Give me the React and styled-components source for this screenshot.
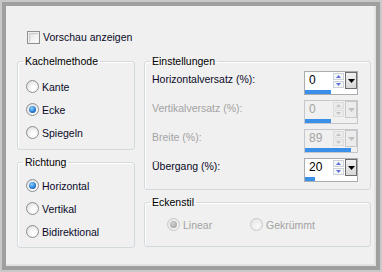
import React from "react";
import styled, { createGlobalStyle } from "styled-components";

const GlobalStyle = createGlobalStyle`
  html, body { margin: 0; padding: 0; background: #f0f0f0; }
  body { font-family: "Liberation Sans", Arial, sans-serif; font-size: 10.5px; color: #000; }
`;

const Frame = styled.div`
  width: 382px;
  height: 272px;
  box-sizing: border-box;
  border: 2px solid #c8c8c8;
  display: flex;
`;

const Panel = styled.div`
  flex: 1;
  border: 4px solid #9f9f9f;
  background: #f0f0f0;
  box-shadow: inset -2px -2px 0 #e2e2e2;
  padding: 25px 0 0 11px;
  display: flex;
  flex-direction: column;
`;

const CheckRow = styled.label`
  display: flex;
  align-items: center;
  gap: 3px;
  height: 13px;
  margin: 0 0 11px 10px;
  line-height: 13px;
  color: #0a0a28;
`;

const CheckBox = styled.span`
  width: 13px;
  height: 13px;
  box-sizing: border-box;
  border: 1px solid #8e8f8f;
  background: linear-gradient(135deg, #dcdcdc 0%, #f4f4f4 60%, #ffffff 100%);
  box-shadow: inset 0 0 0 1px #f2f2f2, inset 1px 1px 1px 1px #c8c8c8;
`;

const Body = styled.div`
  display: flex;
  gap: 9px;
`;

const Column = styled.div`
  width: ${(p) => p.$w}px;
  display: flex;
  flex-direction: column;
`;

const Group = styled.fieldset`
  margin: ${(p) => p.$mt || 0}px 0 0 0;
  padding: ${(p) => p.$pt}px 0 ${(p) => p.$pb}px 0;
  border: 1px solid #d3dade;
  border-radius: 3px;
  box-shadow: inset 1px 1px 0 #ffffff;
  min-width: 0;
`;

const Legend = styled.legend`
  padding: 0 2px;
  margin-left: 5px;
  line-height: 13px;
  color: #000;
`;

const RadioRow = styled.label`
  display: flex;
  align-items: center;
  gap: 3px;
  height: 23px;
  padding-left: ${(p) => p.$pl ?? 8}px;
  width: ${(p) => (p.$w ? `${p.$w}px` : "auto")};
  color: ${(p) => (p.$disabled ? "#a3a3a3" : "#0a0a28")};
`;

const RadioCircle = styled.span`
  width: 13px;
  height: 13px;
  box-sizing: border-box;
  border-radius: 50%;
  border: 1px solid ${(p) => (p.$disabled ? "#c9c9c9" : "#8c8f93")};
  background: ${(p) =>
    p.$disabled
      ? "radial-gradient(circle at 60% 65%, #f8f8f8, #e2e2e2)"
      : "radial-gradient(circle at 60% 65%, #ffffff 20%, #d6d6d6 100%)"};
  display: flex;
  align-items: center;
  justify-content: center;
  &::after {
    content: "";
    display: ${(p) => (p.$checked ? "block" : "none")};
    width: 7px;
    height: 7px;
    border-radius: 50%;
    background: ${(p) =>
      p.$disabled
        ? "radial-gradient(circle at 40% 35%, #d0d0d0, #9a9a9a)"
        : "radial-gradient(circle at 40% 35%, #8fd3ff 0%, #2a7fd4 55%, #0f3f78 100%)"};
  }
`;

const RadioInline = styled.div`
  display: flex;
  padding-left: 22px;
`;

const FieldRow = styled.div`
  display: flex;
  justify-content: space-between;
  align-items: flex-start;
  height: 24px;
  padding: 0 12px 0 7px;
`;

const FieldLabel = styled.span`
  line-height: 17px;
  color: ${(p) => (p.$disabled ? "#a3a3a3" : "#0a0a28")};
`;

const Fields = styled.div`
  display: flex;
  flex-direction: column;
  gap: 5px;
`;

const Spin = styled.div`
  width: 54px;
  height: 24px;
  box-sizing: border-box;
  border: 1px solid ${(p) => (p.$disabled ? "#c4c8cc" : "#a9adb2")};
  display: flex;
  flex-direction: column;
  background: ${(p) => (p.$disabled ? "#f0f0f0" : "#ffffff")};
`;

const SpinTop = styled.div`
  display: flex;
  height: 17px;
`;

const SpinValue = styled.span`
  flex: 1;
  padding-left: 4px;
  font-size: 12px;
  line-height: 17px;
  color: ${(p) => (p.$disabled ? "#a3a3a3" : "#000")};
`;

const SpinButtons = styled.div`
  width: 11px;
  display: flex;
  flex-direction: column;
  gap: 1px;
  padding: 1px 0;
  box-sizing: border-box;
`;

const SpinBtn = styled.span`
  flex: 1;
  display: flex;
  align-items: center;
  justify-content: center;
  border: 1px solid ${(p) => (p.$disabled ? "#dcdcdc" : "#cdd2d8")};
  background: ${(p) => (p.$disabled ? "#ececec" : "#f4f6f8")};
`;

const DropBtn = styled.span`
  width: 12px;
  height: 17px;
  box-sizing: border-box;
  margin-left: 1px;
  border: 1px solid ${(p) => (p.$disabled ? "#c8c8c8" : "#6d6d6d")};
  background: ${(p) => (p.$disabled ? "#ececec" : "linear-gradient(#f2f2f2, #d8d8d8)")};
  display: flex;
  align-items: center;
  justify-content: center;
`;

const BarTrack = styled.div`
  height: 5px;
  padding-top: 1px;
  box-sizing: border-box;
`;

const BarFill = styled.div`
  height: 4px;
  background: #3a8fe8;
`;

const Tri = ({ dir, color, w = 5, h = 3 }) => (
  <svg width={w} height={h} viewBox={`0 0 ${w} ${h}`}>
    {dir === "up" ? (
      <polygon points={`0,${h} ${w / 2},0 ${w},${h}`} fill={color} />
    ) : (
      <polygon points={`0,0 ${w},0 ${w / 2},${h}`} fill={color} />
    )}
  </svg>
);

const Radio = ({ label, checked, disabled, w, pl }) => (
  <RadioRow $disabled={disabled} $w={w} $pl={pl}>
    <RadioCircle $checked={checked} $disabled={disabled} />
    {label}
  </RadioRow>
);

const SpinField = ({ label, value, percent, disabled }) => (
  <FieldRow>
    <FieldLabel $disabled={disabled}>{label}</FieldLabel>
    <Spin $disabled={disabled}>
      <SpinTop>
        <SpinValue $disabled={disabled}>{value}</SpinValue>
        <SpinButtons>
          <SpinBtn $disabled={disabled}>
            <Tri dir="up" color={disabled ? "#c4c4c4" : "#5b6fd8"} />
          </SpinBtn>
          <SpinBtn $disabled={disabled}>
            <Tri dir="down" color={disabled ? "#c4c4c4" : "#5b6fd8"} />
          </SpinBtn>
        </SpinButtons>
        <DropBtn $disabled={disabled}>
          <Tri dir="down" color={disabled ? "#c0c0c0" : "#000"} w={7} h={4} />
        </DropBtn>
      </SpinTop>
      <BarTrack>
        <BarFill style={{ width: `${percent}%` }} />
      </BarTrack>
    </Spin>
  </FieldRow>
);

export default function App() {
  return (
    <>
      <GlobalStyle />
      <Frame>
        <Panel>
          <CheckRow>
            <CheckBox />
            Vorschau anzeigen
          </CheckRow>
          <Body>
            <Column $w={118}>
              <Group $pt={7} $pb={5}>
                <Legend>Kachelmethode</Legend>
                <Radio label="Kante" />
                <Radio label="Ecke" checked />
                <Radio label="Spiegeln" />
              </Group>
              <Group $mt={6} $pt={5} $pb={4}>
                <Legend>Richtung</Legend>
                <Radio label="Horizontal" checked />
                <Radio label="Vertikal" />
                <Radio label="Bidirektional" />
              </Group>
            </Column>
            <Column $w={227}>
              <Group $pt={3} $pb={7}>
                <Legend>Einstellungen</Legend>
                <Fields>
                  <SpinField label="Horizontalversatz (%):" value="0" percent={50} />
                  <SpinField label="Vertikalversatz (%):" value="0" percent={50} disabled />
                  <SpinField label="Breite (%):" value="89" percent={89} disabled />
                  <SpinField label="Übergang (%):" value="20" percent={20} />
                </Fields>
              </Group>
              <Group $mt={6} $pt={4} $pb={10}>
                <Legend>Eckenstil</Legend>
                <RadioInline>
                  <Radio label="Linear" checked disabled w={83} pl={0} />
                  <Radio label="Gekrümmt" disabled pl={0} />
                </RadioInline>
              </Group>
            </Column>
          </Body>
        </Panel>
      </Frame>
    </>
  );
}
